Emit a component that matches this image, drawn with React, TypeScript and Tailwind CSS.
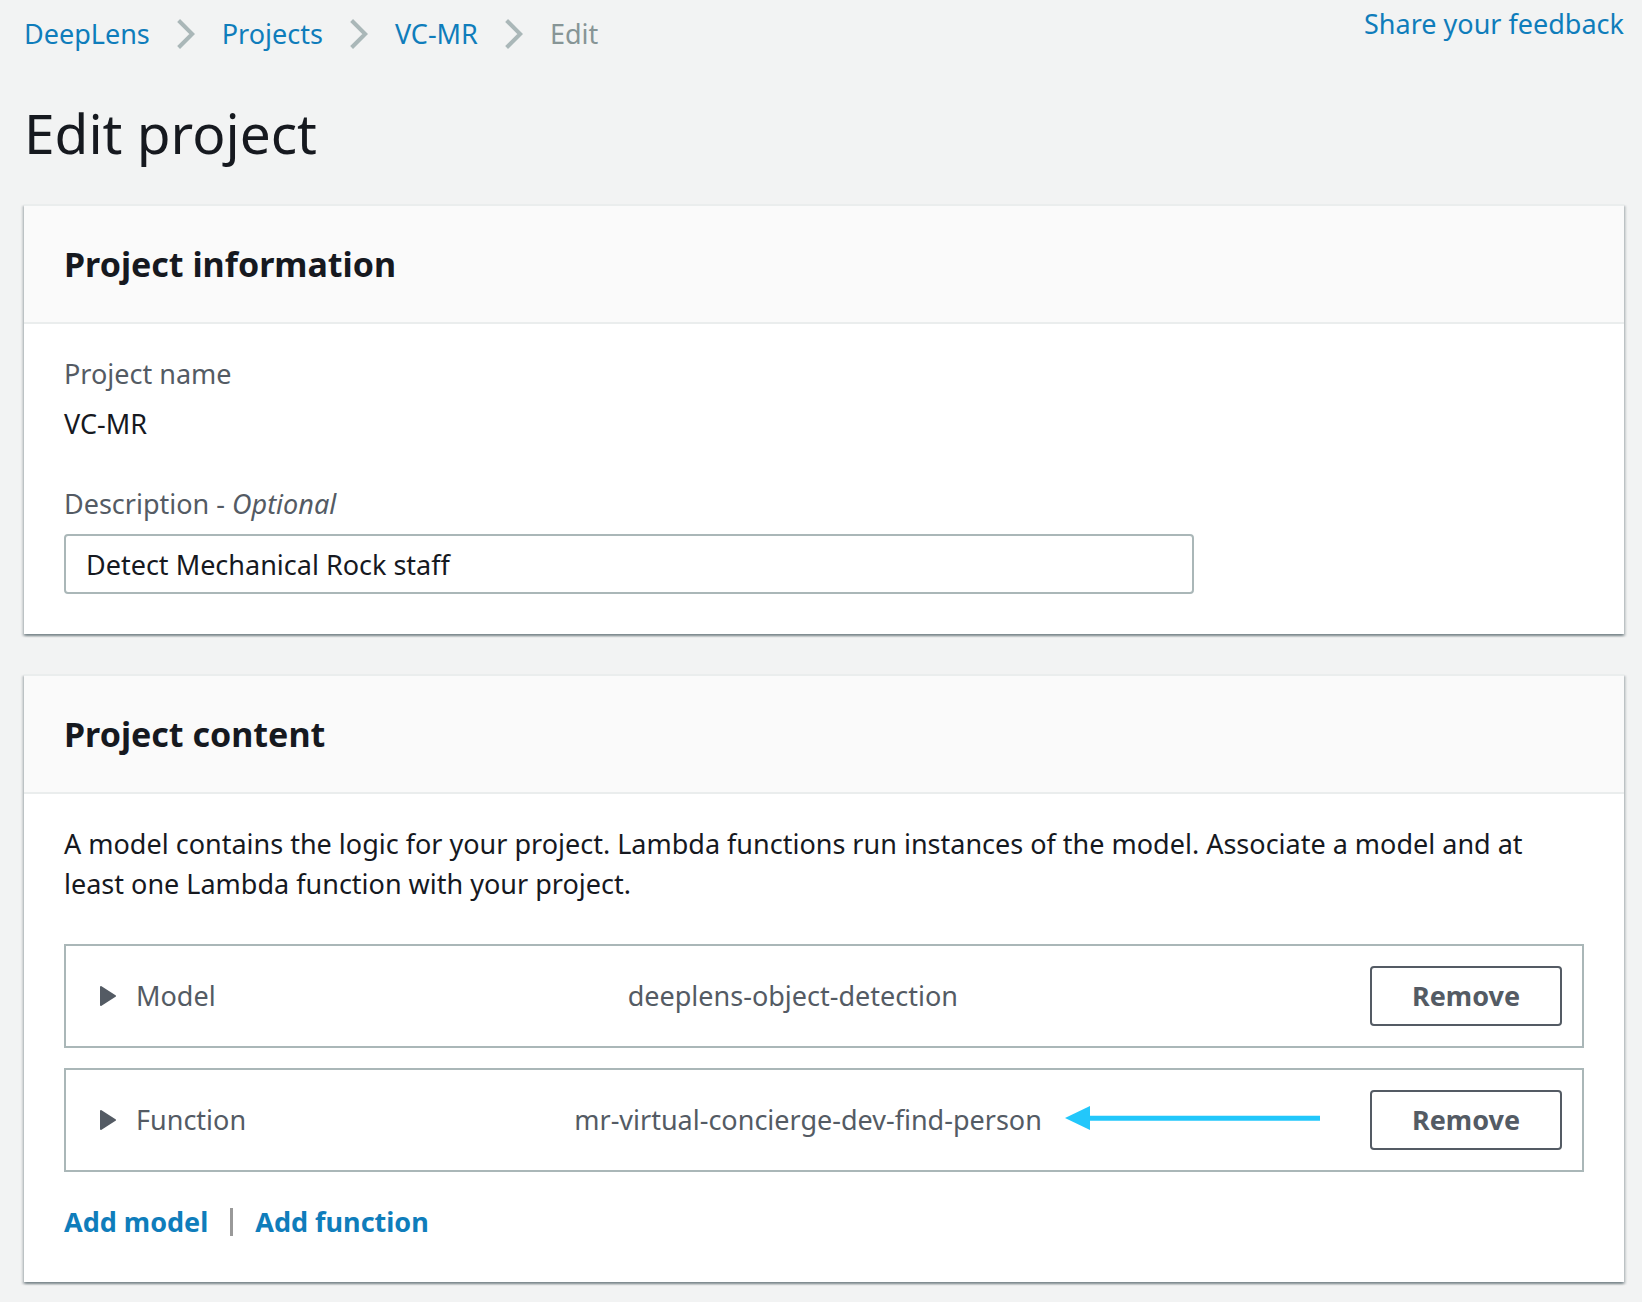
import { Fragment, type ReactNode } from 'react';

const trail = ['DeepLens', 'Projects', 'VC-MR'];

function Chevron() {
  return (
    <svg aria-hidden="true" className="h-[30px] w-[18px] shrink-0" viewBox="0 0 18 30" fill="none">
      <path d="M1.6 1.5 L15.2 15 L1.6 28.5" stroke="#aab7b8" strokeWidth="4" />
    </svg>
  );
}

function Caret() {
  return (
    <svg aria-hidden="true" className="h-5 w-4 shrink-0" viewBox="0 0 16 20">
      <path d="M1 1 L15 10 L1 19 Z" fill="#545b64" stroke="#545b64" strokeWidth="2" strokeLinejoin="round" />
    </svg>
  );
}

function Arrow() {
  return (
    <svg
      aria-hidden="true"
      className="pointer-events-none absolute top-9 right-[262px] h-6 w-[255px]"
      viewBox="0 0 255 24"
      fill="#22c7fb"
    >
      <path d="M0 12 L25 0 V24 Z" />
      <path d="M24 9.7 H255 V14.7 H24 Z" />
    </svg>
  );
}

function Card({ title, children }: { title: string; children: ReactNode }) {
  return (
    <section className="border-t-2 border-[#eaeded] bg-white shadow-[0_2px_2px_0_rgba(0,28,36,0.3),2px_2px_2px_0_rgba(0,28,36,0.15),-2px_2px_2px_0_rgba(0,28,36,0.15)]">
      <header className="border-b-2 border-[#eaeded] bg-[#fafafa] px-10 py-9">
        <h2 className="text-[34px] leading-[44px] font-bold">{title}</h2>
      </header>
      <div className="px-10 pt-[30px] pb-10">{children}</div>
    </section>
  );
}

function ResourceRow({ kind, name, children }: { kind: string; name: string; children?: ReactNode }) {
  return (
    <li className="relative flex items-center justify-between border-2 border-[#aab7b8] py-5 pr-5 pl-[34px] text-[#545b64]">
      <button type="button" aria-expanded="false" className="flex items-center gap-5">
        <Caret />
        {kind}
      </button>
      <span>{name}</span>
      {children}
      <button
        type="button"
        aria-label={`Remove ${name}`}
        className="h-[60px] w-48 rounded-sm border-2 border-[#545b64] bg-white font-bold"
      >
        Remove
      </button>
    </li>
  );
}

export default function App() {
  return (
    <div className="min-h-screen bg-[#f2f3f3] pr-[18px] pb-5 pl-6 font-['Noto_Sans',sans-serif] text-[27px] leading-10 text-[#16191f]">
      <div className="flex items-start justify-between pt-1">
        <nav aria-label="Breadcrumb" className="flex items-center gap-[27px] pt-[10px]">
          {trail.map((item) => (
            <Fragment key={item}>
              <a href="#" className="text-[#0f7dbb]">
                {item}
              </a>
              <Chevron />
            </Fragment>
          ))}
          <span aria-current="page" className="text-[#879596]">
            Edit
          </span>
        </nav>
        <a href="#" className="text-[#0f7dbb]">
          Share your feedback
        </a>
      </div>

      <h1 className="mt-11 mb-9 text-[55px] leading-[70px]">Edit project</h1>

      <main className="flex flex-col gap-10">
        <Card title="Project information">
          <dl className="flex flex-col gap-[10px]">
            <dt className="text-[#545b64]">Project name</dt>
            <dd>VC-MR</dd>
          </dl>
          <div className="mt-10 flex flex-col gap-[10px]">
            <label htmlFor="description" className="text-[#545b64]">
              Description - <em>Optional</em>
            </label>
            <input
              id="description"
              type="text"
              defaultValue="Detect Mechanical Rock staff"
              className="h-[60px] w-full max-w-[1130px] rounded-sm border-2 border-[#aab7b8] bg-white px-5"
            />
          </div>
        </Card>

        <Card title="Project content">
          <p>
            A model contains the logic for your project. Lambda functions run instances of the model. Associate a model
            and at least one Lambda function with your project.
          </p>
          <ul className="mt-10 flex flex-col gap-5">
            <ResourceRow kind="Model" name="deeplens-object-detection" />
            <ResourceRow kind="Function" name="mr-virtual-concierge-dev-find-person">
              <Arrow />
            </ResourceRow>
          </ul>
          <div className="mt-[30px] flex items-center gap-[22px] font-bold text-[#0f7dbb]">
            <a href="#">Add model</a>
            <span aria-hidden="true" className="h-7 w-[3px] bg-[#999]" />
            <a href="#">Add function</a>
          </div>
        </Card>
      </main>
    </div>
  );
}
